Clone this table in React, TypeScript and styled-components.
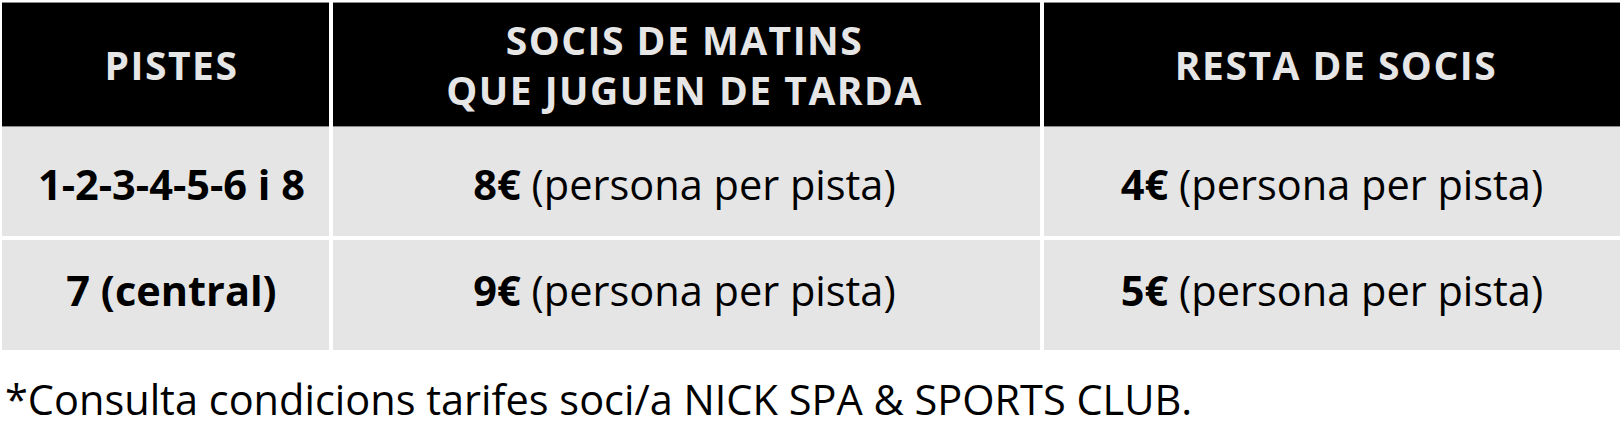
import styled, { createGlobalStyle } from "styled-components";

const GlobalStyle = createGlobalStyle`
  html, body {
    margin: 0;
    padding: 0;
    background: #ffffff;
  }
  body {
    font-family: "Open Sans", "DejaVu Sans", sans-serif;
    color: #000000;
  }
`;

const Page = styled.div`
  padding: 2px 3px 0 2px;
`;

const Table = styled.div`
  display: flex;
  flex-direction: column;
  width: 1618px;
`;

const Row = styled.div<{ $height: number; $gap?: number }>`
  display: grid;
  grid-template-columns: 327px 707px 576px;
  column-gap: 4px;
  height: ${({ $height }) => $height}px;
  margin-top: ${({ $gap }) => $gap ?? 0}px;
`;

const HeadCell = styled.div<{ $shift?: number }>`
  display: flex;
  align-items: center;
  justify-content: center;
  background-color: #000000;
  color: #e6e6e6;
  font-size: 39px;
  font-weight: 700;
  letter-spacing: 1.5px;
  line-height: 50px;
  text-align: center;
  padding-left: ${({ $shift }) => ($shift && $shift > 0 ? $shift * 2 : 0)}px;
  padding-right: ${({ $shift }) => ($shift && $shift < 0 ? -$shift * 2 : 0)}px;
  border-top: 1px solid #8a8a8a;
  border-bottom: 1px solid #8a8a8a;
  box-sizing: border-box;
`;

const Cell = styled.div<{ $shift?: number; $top: number }>`
  display: flex;
  align-items: flex-start;
  justify-content: center;
  background-color: #e5e5e5;
  font-size: 41.5px;
  line-height: 56px;
  padding-top: ${({ $top }) => $top}px;
  padding-left: ${({ $shift }) => ($shift && $shift > 0 ? $shift * 2 : 0)}px;
  padding-right: ${({ $shift }) => ($shift && $shift < 0 ? -$shift * 2 : 0)}px;
  box-sizing: border-box;
  white-space: nowrap;
`;

const Strong = styled.b`
  font-weight: 700;
`;

const Note = styled.p`
  margin: 21px 0 0 3px;
  font-size: 41.5px;
  line-height: 56px;
  color: #000000;
`;

interface Tariff {
  pistes: string;
  matins: string;
  resta: string;
  top: number;
  height: number;
  gap: number;
}

const tariffs: Tariff[] = [
  { pistes: "1-2-3-4-5-6 i 8", matins: "8€", resta: "4€", top: 29, height: 109, gap: 0 },
  { pistes: "7 (central)", matins: "9€", resta: "5€", top: 22, height: 110, gap: 4 },
];

function App() {
  return (
    <Page>
      <GlobalStyle />
      <Table>
        <Row $height={125}>
          <HeadCell $shift={6}>PISTES</HeadCell>
          <HeadCell $shift={-2}>
            SOCIS DE MATINS
            <br />
            QUE JUGUEN DE TARDA
          </HeadCell>
          <HeadCell $shift={4}>RESTA DE SOCIS</HeadCell>
        </Row>

        {tariffs.map((t) => (
          <Row key={t.pistes} $height={t.height} $gap={t.gap}>
            <Cell $shift={6} $top={t.top}>
              <Strong>{t.pistes}</Strong>
            </Cell>
            <Cell $shift={-2} $top={t.top}>
              <Strong>{t.matins}</Strong>&nbsp;(persona per pista)
            </Cell>
            <Cell $top={t.top}>
              <Strong>{t.resta}</Strong>&nbsp;(persona per pista)
            </Cell>
          </Row>
        ))}
      </Table>

      <Note>*Consulta condicions tarifes soci/a NICK SPA &amp; SPORTS CLUB.</Note>
    </Page>
  );
}

export default App;
